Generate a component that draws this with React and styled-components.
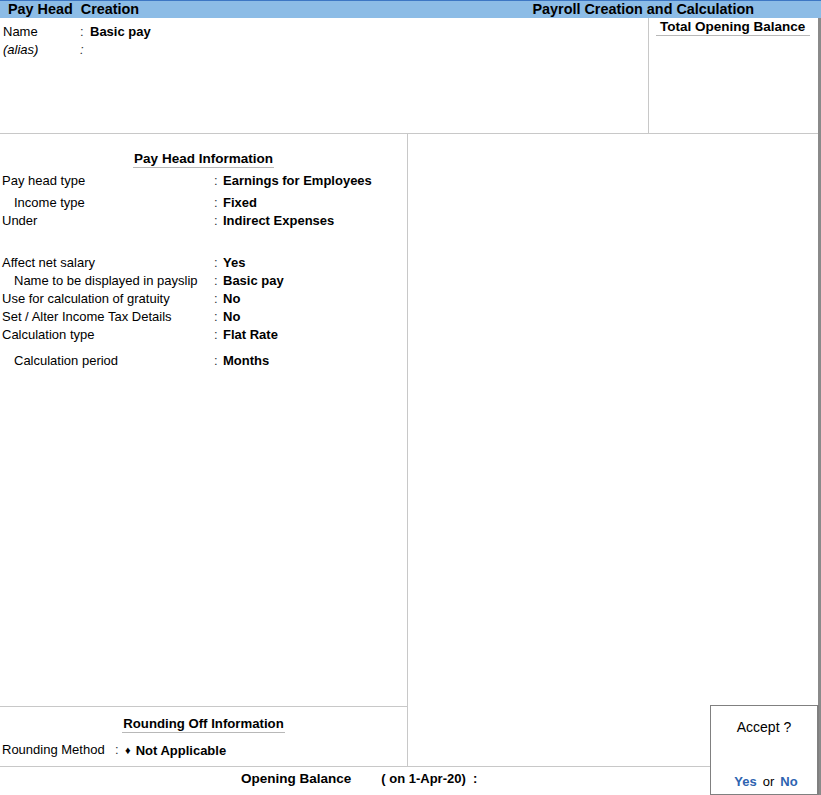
import React from 'react'
import styled, { createGlobalStyle } from 'styled-components';

const GlobalStyle = createGlobalStyle`
  *, *::before, *::after { box-sizing: border-box; }
  html, body { margin: 0; padding: 0; background: #fff; }
  body { font-family: "Liberation Sans", Arial, sans-serif; font-size: 13px; color: #000; }
`

const Screen = styled.div`
  position: relative;
  width: 821px;
  height: 795px;
  display: flex;
  flex-direction: column;
  overflow: hidden;
`

const TitleBar = styled.div`
  height: 18px;
  border-top: 1px solid #3d77c4;
  background: #8cbce6;
  display: flex;
  justify-content: space-between;
  align-items: center;
  padding: 0 67px 0 8px;
  font-weight: bold;
  font-size: 14.4px;
  line-height: 17px;
  white-space: pre;
`

const Body = styled.div`
  flex: 1;
  display: flex;
  flex-direction: column;
  border-right: 3px solid #8a8a8a;
`

const TopSection = styled.div`
  height: 116px;
  display: grid;
  grid-template-columns: 1fr 170px;
  border-bottom: 1px solid #c8c8c8;
`

const NameBlock = styled.div`
  padding: 5px 0 0 3px;
`

const NameRow = styled.div`
  display: grid;
  grid-template-columns: 77px 10px 1fr;
  line-height: 18px;
  font-style: ${(props) => (props.italic ? 'italic' : 'normal')};
`

const TotalBox = styled.div`
  border-left: 1px solid #c8c8c8;
  padding: 1px 8px 0 7px;
`

const Heading = styled.div`
  font-weight: bold;
  font-size: ${(props) => props.size || 13.5}px;
  line-height: 16px;
  border-bottom: 1px solid #b8b8b8;
  padding: 0 ${(props) => props.pad || 1}px;
`

const HeadingWrap = styled.div`
  display: flex;
  justify-content: center;
  margin-top: ${(props) => props.top}px;
`

const Middle = styled.div`
  flex: 1;
  display: grid;
  grid-template-columns: 408px 1fr;
`

const LeftColumn = styled.div`
  display: flex;
  flex-direction: column;
  border-right: 1px solid #c8c8c8;
`

const InfoBlock = styled.div`
  flex: 1;
`

const Row = styled.div`
  display: grid;
  grid-template-columns: ${(props) => props.labelWidth || 212}px 9px 1fr;
  line-height: 18px;
  margin-top: ${(props) => props.top || 0}px;
  padding-left: 2px;
`

const Label = styled.span`
  padding-left: ${(props) => (props.indent ? 12 : 0)}px;
  white-space: nowrap;
`

const Colon = styled.span`
  color: #333;
`

const Value = styled.span`
  font-weight: bold;
  white-space: nowrap;
`

const Diamond = styled.span`
  font-size: 11px;
  margin: 0 5px 0 1px;
  vertical-align: 1px;
`

const RoundingBlock = styled.div`
  height: 60px;
  border-top: 1px solid #c8c8c8;
`

const Footer = styled.div`
  height: 29px;
  border-top: 1px solid #c8c8c8;
  display: flex;
  align-items: flex-start;
  padding: 4px 0 0 241px;
  font-weight: bold;
  font-size: 13.5px;
  line-height: 16px;
  white-space: pre;
`

const FooterDate = styled.span`
  margin-left: 30px;
  font-size: 13px;
`

const AcceptBox = styled.div`
  position: absolute;
  left: 710px;
  top: 705px;
  width: 109px;
  height: 90px;
  border: 1px solid #808080;
  border-right-width: 2px;
  background: #fff;
  display: flex;
  flex-direction: column;
  align-items: center;
  justify-content: space-between;
  padding: 13px 0 4px;
`

const AcceptTitle = styled.div`
  font-size: 14px;
`

const Choice = styled.div`
  font-size: 13px;
  line-height: 16px;
  display: flex;
  gap: 6px;
  margin-left: 4px;
`

const Key = styled.span`
  color: #2e63b0;
  font-weight: bold;
`

const infoRows = [
  { label: 'Pay head type', value: 'Earnings for Employees', top: 4 },
  { label: 'Income type', value: 'Fixed', top: 4, indent: true },
  { label: 'Under', value: 'Indirect Expenses' },
  { label: 'Affect net salary', value: 'Yes', top: 24 },
  { label: 'Name to be displayed in payslip', value: 'Basic pay', indent: true },
  { label: 'Use for calculation of gratuity', value: 'No' },
  { label: 'Set / Alter Income Tax Details', value: 'No' },
  { label: 'Calculation type', value: 'Flat Rate' },
  { label: 'Calculation period', value: 'Months', top: 8, indent: true },
]

const App = () => {
  return (
    <Screen>
      <GlobalStyle />
      <TitleBar>
        <span>Pay Head  Creation</span>
        <span>Payroll Creation and Calculation</span>
      </TitleBar>
      <Body>
        <TopSection>
          <NameBlock>
            <NameRow>
              <span>Name</span>
              <Colon>:</Colon>
              <Value>Basic pay</Value>
            </NameRow>
            <NameRow italic>
              <span>(alias)</span>
              <Colon>:</Colon>
              <span></span>
            </NameRow>
          </NameBlock>
          <TotalBox>
            <Heading pad={4}>Total Opening Balance</Heading>
          </TotalBox>
        </TopSection>
        <Middle>
          <LeftColumn>
            <InfoBlock>
              <HeadingWrap top={17}>
                <Heading>Pay Head Information</Heading>
              </HeadingWrap>
              {infoRows.map((r, i) => (
                <Row key={i} top={r.top}>
                  <Label indent={r.indent}>{r.label}</Label>
                  <Colon>:</Colon>
                  <Value>{r.value}</Value>
                </Row>
              ))}
            </InfoBlock>
            <RoundingBlock>
              <HeadingWrap top={9}>
                <Heading size={13.2}>Rounding Off Information</Heading>
              </HeadingWrap>
              <Row top={8} labelWidth={113}>
                <Label>Rounding Method</Label>
                <Colon>:</Colon>
                <Value><Diamond>♦</Diamond>Not Applicable</Value>
              </Row>
            </RoundingBlock>
          </LeftColumn>
          <div />
        </Middle>
        <Footer>
          <span>Opening Balance</span>
          <FooterDate>( on 1-Apr-20)  :</FooterDate>
        </Footer>
      </Body>
      <AcceptBox>
        <AcceptTitle>Accept ?</AcceptTitle>
        <Choice>
          <Key>Yes</Key>
          <span>or</span>
          <Key>No</Key>
        </Choice>
      </AcceptBox>
    </Screen>
  )
}

export default App
